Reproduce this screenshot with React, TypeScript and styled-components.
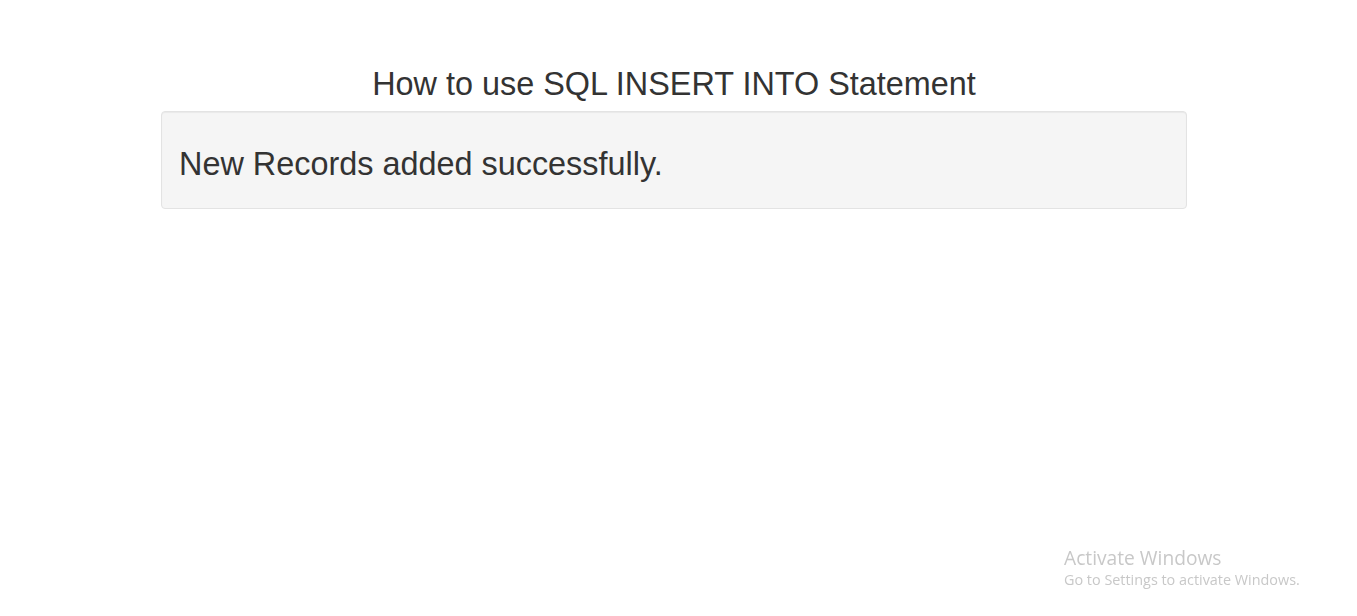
import React from "react";
import styled, { createGlobalStyle } from "styled-components";

const Global = createGlobalStyle`
  html, body { margin: 0; padding: 0; background: #ffffff; }
  body { font-family: "Liberation Sans", Arial, Helvetica, sans-serif; color: #333333; }
`;

const Page = styled.div`
  padding: 65px 9px 0 0;
  min-height: 616px;
  box-sizing: border-box;
`;

const Container = styled.div`
  width: 1026px;
  margin: 0 auto;
`;

const Title = styled.h2`
  margin: 0 0 8px;
  font-size: 32.4px;
  font-weight: 400;
  line-height: 38px;
  text-align: center;
  color: #333333;
`;

const Well = styled.div`
  box-sizing: border-box;
  height: 98px;
  padding: 34px 17px 0;
  background: #f5f5f5;
  border: 1px solid #e3e3e3;
  border-radius: 4px;
  box-shadow: inset 0 1px 1px rgba(0, 0, 0, 0.05);
  font-size: 32.4px;
  line-height: 36px;
  color: #333333;
`;

const Watermark = styled.div`
  position: fixed;
  left: 1064px;
  top: 545px;
  font-family: "Open Sans", "Noto Sans", sans-serif;
  color: #c8c8c8;
`;

const WatermarkTitle = styled.div`
  font-size: 19.2px;
  line-height: 25px;
`;

const WatermarkSub = styled.div`
  font-size: 14.4px;
  line-height: 20px;
`;

export default function App() {
  return (
    <>
      <Global />
      <Page>
        <Container>
          <Title>How to use SQL INSERT INTO Statement</Title>
          <Well>New Records added successfully.</Well>
        </Container>
      </Page>
      <Watermark>
        <WatermarkTitle>Activate Windows</WatermarkTitle>
        <WatermarkSub>Go to Settings to activate Windows.</WatermarkSub>
      </Watermark>
    </>
  );
}
